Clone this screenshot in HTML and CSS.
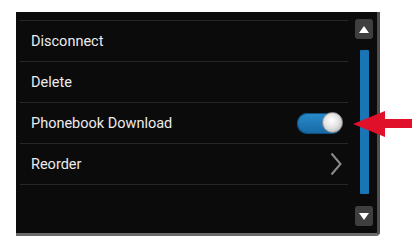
FILE: index.html
```html
<!DOCTYPE html>
<html>
<head>
<meta charset="utf-8">
<link rel="stylesheet" href="styles.css">
</head>
<body>
<div class="page">
  <div class="screen">
    <div class="list">
      <div class="row"><span class="label">Disconnect</span></div>
      <div class="row"><span class="label">Delete</span></div>
      <div class="row"><span class="label">Phonebook Download</span><span class="toggle"><span class="knob"></span></span></div>
      <div class="row last"><span class="label">Reorder</span>
        <svg class="chev" width="12" height="24" viewBox="0 0 12 24"><path d="M1.5 1.5 L10.5 12 L1.5 22.5" fill="none" stroke="#8a8a8a" stroke-width="2"/></svg>
      </div>
    </div>
    <div class="scroll">
      <div class="btn"><svg width="10" height="7" viewBox="0 0 10 7"><path d="M0 7 L5 0 L10 7 Z" fill="#fff"/></svg></div>
      <div class="thumb"></div>
      <div class="btn"><svg width="10" height="7" viewBox="0 0 10 7"><path d="M0 0 L10 0 L5 7 Z" fill="#fff"/></svg></div>
    </div>
  </div>
  <svg class="arrow" width="60" height="26" viewBox="0 0 60 26"><path d="M0 13 L32 0 L32 8 L59 8 L59 17 L32 17 L32 26 Z" fill="#e0102a"/></svg>
</div>
</body>
</html>
```
FILE: styles.css
```css
html, body { margin: 0; padding: 0; background: #fff; }
.page { position: relative; width: 420px; height: 248px; padding: 12px 0 0 16px; box-sizing: border-box; }
.screen {
  display: flex;
  width: 364px; height: 224px; box-sizing: border-box;
  background: #0b0b0b;
  border-right: 3px solid #4e4e4e;
  border-bottom: 3px solid #6a6a6a;
  border-bottom-right-radius: 4px;
  font-family: Roboto, "Liberation Sans", sans-serif;
}
.list { width: 328px; margin-left: 4px; padding-top: 8px; }
.row {
  height: 40px; border-top: 1px solid #262626;
  display: flex; align-items: center; justify-content: space-between;
  padding: 0 6px 0 11px;
}
.row.last { border-bottom: 1px solid #262626; }
.label { color: #ececec; font-size: 14.5px; font-weight: 400; }
.toggle {
  position: relative; width: 45px; height: 21px; border-radius: 11px;
  background: linear-gradient(#2a8ccc, #1667a3);
  box-shadow: inset 0 0 0 1px #0f4f80;
}
.knob {
  position: absolute; right: -1px; top: -1px; width: 21px; height: 21px; border-radius: 50%;
  background: radial-gradient(circle at 45% 40%, #ffffff 0%, #e4e4e4 45%, #a9a9a9 100%);
  border: 1px solid #8e8e8e; box-sizing: border-box;
}
.chev { display: block; }
.scroll { display: flex; flex-direction: column; align-items: center; margin-left: 7px; padding-top: 7px; width: 18px; }
.btn {
  width: 18px; height: 20px; border-radius: 3px; background: #3f3f3f;
  display: flex; align-items: center; justify-content: center;
}
.thumb { width: 9px; height: 144px; margin: 11px 0 12px; background: #1a75b4; border-radius: 1px; }
.arrow { position: absolute; left: 353px; top: 111px; }
```
